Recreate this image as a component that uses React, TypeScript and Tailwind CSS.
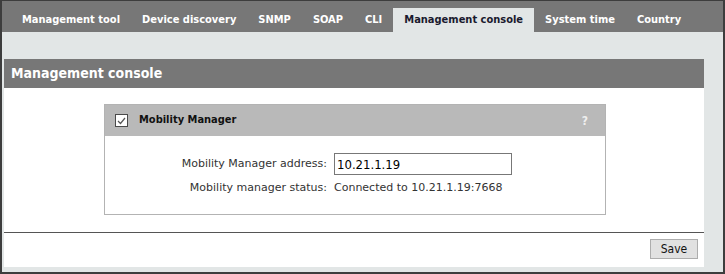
import React from 'react';

const tabs = [
  'Management tool',
  'Device discovery',
  'SNMP',
  'SOAP',
  'CLI',
  'Management console',
  'System time',
  'Country',
];

const App = () => {
  const active = 'Management console';
  return (
    <div className="w-[725px] h-[274px] flex flex-col bg-[#e2e6e6] border-t border-l-2 border-r-2 border-b-2 border-[#3d3d3d] font-['DejaVu_Sans_Condensed','DejaVu_Sans',sans-serif] text-[11px] text-[#222]">
      {/* tabs */}
      <div className="h-[31px] shrink-0 bg-[#777777] flex items-end pl-[9px]">
        {tabs.map((t) => (
          <div
            key={t}
            className={
              t === active
                ? 'h-[24px] px-[11px] flex items-center font-bold bg-[#e2e6e6] text-[#1a1a2e]'
                : 'h-[24px] px-[11px] flex items-center font-bold text-white'
            }
          >
            {t}
          </div>
        ))}
      </div>

      <div className="flex-1 flex flex-col pt-[27px] pl-[2px] pr-[19px] pb-[5px]">
        <div className="h-[29px] shrink-0 bg-[#777777] flex items-center pl-[7px] text-white font-bold text-[14px]">
          Management console
        </div>
        <div className="flex-1 flex flex-col bg-white">
          {/* mobility manager box */}
          <div className="mt-[16px] ml-[100px] w-[502px] h-[111px] border border-[#b3b3b3] flex flex-col">
            <div className="h-[31px] shrink-0 bg-[#b9b9b9] flex items-center pl-[10px] pr-[17px]">
              <div className="w-[13px] h-[13px] bg-white border border-[#4a4a4a] flex items-center justify-center">
                <svg width="9" height="8" viewBox="0 0 9 8">
                  <path d="M1 4 L3.5 6.5 L8 1" fill="none" stroke="#555" strokeWidth="1.2" />
                </svg>
              </div>
              <span className="ml-[11px] font-bold text-[#111]">Mobility Manager</span>
              <span className="ml-auto font-bold text-[#eeeeee] text-[12px]">?</span>
            </div>
            <div className="flex flex-col pt-[17px] font-['DejaVu_Sans',sans-serif]">
              <div className="flex items-center h-[22px]">
                <div className="w-[222px] text-right text-[#333]">Mobility Manager address:</div>
                <input
                  className="ml-[7px] w-[178px] h-[22px] border border-[#777] px-[2px] text-[13px] text-[#000] outline-none font-['DejaVu_Sans_Condensed',sans-serif]"
                  defaultValue="10.21.1.19"
                />
              </div>
              <div className="flex items-center mt-[5px] h-[16px]">
                <div className="w-[222px] text-right text-[#333]">Mobility manager status:</div>
                <div className="ml-[7px] text-[#333]">Connected to 10.21.1.19:7668</div>
              </div>
            </div>
          </div>

          <div className="mt-[17px] h-px bg-[#555555]" />

          <div className="flex justify-end pt-[6px] pr-[6px]">
            <button
              type="button"
              className="w-[48px] h-[20px] bg-[#e1e1e1] border border-[#adadad] text-[12px] text-[#111] leading-none"
            >
              Save
            </button>
          </div>
        </div>
      </div>
    </div>
  );
};

export default App;
